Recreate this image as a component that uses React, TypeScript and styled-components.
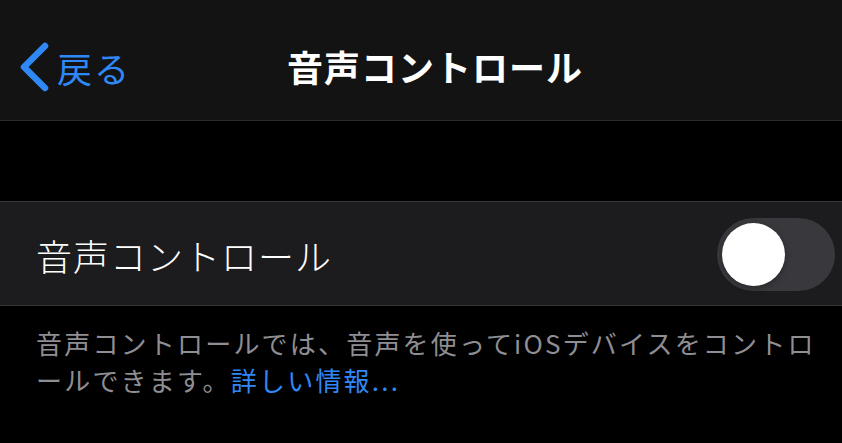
import React, { useState } from 'react';
import styled, { createGlobalStyle } from 'styled-components';

const COLOR = {
  blue: '#2f88f5',
  nav: '#131313',
  cell: '#1c1c1e',
  separator: '#38383a',
  label: '#ffffff',
  secondary: '#8e8e93',
  track: '#39393d',
};

const FONT = '"Noto Sans CJK JP", "Noto Sans", sans-serif';

const GlobalStyle = createGlobalStyle`
  html, body {
    margin: 0;
    padding: 0;
    background: #000;
  }
  body {
    font-family: ${FONT};
    -webkit-font-smoothing: antialiased;
  }
`;

const Screen = styled.div`
  width: 842px;
  height: 443px;
  overflow: hidden;
  background: #000;
  display: flex;
  flex-direction: column;
`;

const NavBar = styled.header`
  flex: none;
  box-sizing: border-box;
  height: 121px;
  padding-top: 14px;
  background: ${COLOR.nav};
  border-bottom: 1px solid #2a2a2c;
  display: grid;
  grid-template-columns: 1fr auto 1fr;
  align-items: center;
`;

const BackButton = styled.button`
  justify-self: start;
  display: flex;
  align-items: center;
  gap: 8px;
  margin: 0;
  padding: 0 0 0 20px;
  border: 0;
  background: none;
  color: ${COLOR.blue};
  font-family: ${FONT};
  font-size: 35px;
  letter-spacing: 2px;
  line-height: 1;
  cursor: pointer;
`;

const Title = styled.h1`
  margin: 0 0 2px 28px;
  color: ${COLOR.label};
  font-size: 36px;
  font-weight: 700;
  letter-spacing: 1px;
  line-height: 1;
`;

const GroupSpacer = styled.div`
  flex: none;
  height: 80px;
`;

const Group = styled.section`
  flex: none;
  background: ${COLOR.cell};
  border-top: 1px solid ${COLOR.separator};
  border-bottom: 1px solid ${COLOR.separator};
`;

const Row = styled.div`
  height: 103px;
  display: flex;
  align-items: center;
  justify-content: space-between;
  padding: 0 7px 0 36px;
`;

const RowLabel = styled.span`
  color: ${COLOR.label};
  font-size: 36px;
  font-weight: 300;
  letter-spacing: 1px;
  line-height: 1;
  margin-top: 2px;
`;

const Track = styled.button<{ on: boolean }>`
  width: 118px;
  height: 73px;
  margin: 2px 0 0;
  padding: 0 5px;
  border: 0;
  border-radius: 37px;
  background: ${p => (p.on ? '#32d74b' : COLOR.track)};
  display: flex;
  align-items: center;
  justify-content: ${p => (p.on ? 'flex-end' : 'flex-start')};
  cursor: pointer;
`;

const Knob = styled.span`
  width: 63px;
  height: 63px;
  border-radius: 50%;
  background: #fff;
  box-shadow: 0 2px 6px rgba(0, 0, 0, 0.3);
`;

const Footer = styled.p`
  margin: 0;
  padding: 18px 20px 0 36px;
  color: ${COLOR.secondary};
  font-size: 26px;
  letter-spacing: 2.2px;
  line-height: 37px;
  line-break: loose;
`;

const Link = styled.a`
  color: ${COLOR.blue};
  text-decoration: none;
`;

const Chevron = () => (
  <svg width="29" height="50" viewBox="0 0 29 50" aria-hidden>
    <polyline
      points="25,4 4,25 25,46"
      fill="none"
      stroke={COLOR.blue}
      strokeWidth="6.5"
      strokeLinecap="round"
      strokeLinejoin="round"
    />
  </svg>
);

export default function App() {
  const [on, setOn] = useState(false);
  return (
    <>
      <GlobalStyle />
      <Screen>
        <NavBar>
          <BackButton>
            <Chevron />
            戻る
          </BackButton>
          <Title>音声コントロール</Title>
          <span />
        </NavBar>
        <GroupSpacer />
        <Group>
          <Row>
            <RowLabel>音声コントロール</RowLabel>
            <Track on={on} onClick={() => setOn(!on)} aria-pressed={on}>
              <Knob />
            </Track>
          </Row>
        </Group>
        <Footer>
          音声コントロールでは、音声を使ってiOSデバイスをコントロールできます。
          <Link href="#">詳しい情報...</Link>
        </Footer>
      </Screen>
    </>
  );
}
